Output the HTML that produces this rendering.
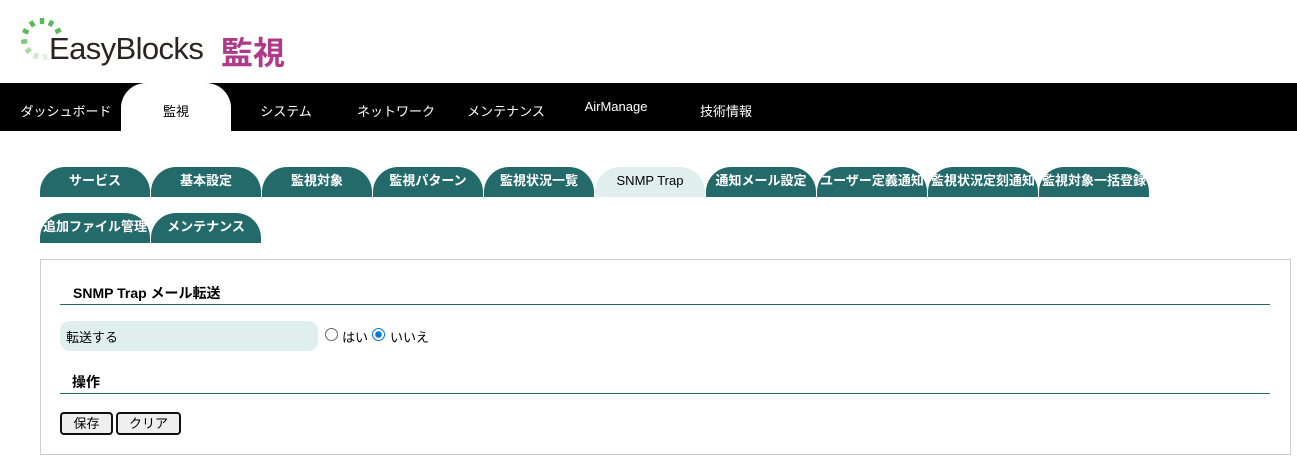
<!DOCTYPE html>
<html><head><meta charset="utf-8"><style>
body{margin:0;width:1297px;height:460px;background:#fff;font-family:"Liberation Sans","Noto Sans CJK JP",sans-serif;position:relative;overflow:hidden}
.abs{position:absolute}
.nav{position:absolute;left:0;top:83px;width:1297px;height:48px;background:#000}
.ni{position:absolute;color:#fff;font-size:13px;top:18px;transform:translateX(-50%);white-space:nowrap}
.tab{position:absolute;width:110px;height:30px;background:#256a6a;color:#fff;border-radius:25px 25px 0 0;font-size:13px;font-weight:bold;text-align:center;line-height:28px;white-space:nowrap;overflow:hidden}
.btn{position:absolute;top:412px;height:19px;border:2px solid #111;border-radius:4px;background:#efefef;font-size:13px;line-height:19px;text-align:center}
</style></head><body>
<svg class="abs" style="left:0;top:0" width="80" height="70" viewBox="0 0 80 70">
<g stroke-width="4.5" transform="translate(42,39)">
<line x1="0" y1="-21" x2="0" y2="-15" stroke="#5cb85c" transform="rotate(63)"/>
<line x1="0" y1="-21" x2="0" y2="-15" stroke="#5cb85c" transform="rotate(30)"/>
<line x1="0" y1="-21" x2="0" y2="-15" stroke="#5cb85c" transform="rotate(0)"/>
<line x1="0" y1="-21" x2="0" y2="-15" stroke="#5cb85c" transform="rotate(-33)"/>
<line x1="0" y1="-21" x2="0" y2="-15" stroke="#5cb85c" transform="rotate(-65)"/>
<line x1="0" y1="-21" x2="0" y2="-15" stroke="#7cc77c" transform="rotate(-98)"/>
<line x1="0" y1="-21" x2="0" y2="-15" stroke="#a9daa9" transform="rotate(-130)"/>
<line x1="0" y1="-21" x2="0" y2="-15" stroke="#cdeacd" transform="rotate(-160)"/>
<line x1="0" y1="-21" x2="0" y2="-15" stroke="#e3f3e3" transform="rotate(170)"/>
</g></svg>
<div class="abs" style="left:49px;top:31px;font-size:31px;color:#2b2222;letter-spacing:-0.6px">EasyBlocks</div>
<div class="abs" style="left:221px;top:28px;font-size:32px;font-weight:bold;color:#b03a8a">監視</div>
<div class="nav">
<div class="abs" style="left:121px;top:0;width:110px;height:48px;background:#fff;border-radius:25px 25px 0 0"></div>
<div class="ni" style="left:66px">ダッシュボード</div>
<div class="ni" style="left:176px;color:#000">監視</div>
<div class="ni" style="left:286px">システム</div>
<div class="ni" style="left:396px">ネットワーク</div>
<div class="ni" style="left:506px">メンテナンス</div>
<div class="ni" style="left:616px;top:16px">AirManage</div>
<div class="ni" style="left:726px">技術情報</div>
</div>
<div class="tab" style="left:40px;top:167px">サービス</div>
<div class="tab" style="left:151px;top:167px">基本設定</div>
<div class="tab" style="left:262px;top:167px">監視対象</div>
<div class="tab" style="left:373px;top:167px">監視パターン</div>
<div class="tab" style="left:484px;top:167px">監視状況一覧</div>
<div class="tab" style="left:595px;top:167px;background:#e0eeee;color:#000;font-weight:normal">SNMP Trap</div>
<div class="tab" style="left:706px;top:167px">通知メール設定</div>
<div class="tab" style="left:817px;top:167px">ユーザー定義通知</div>
<div class="tab" style="left:928px;top:167px">監視状況定刻通知</div>
<div class="tab" style="left:1039px;top:167px">監視対象一括登録</div>
<div class="tab" style="left:40px;top:213px">追加ファイル管理</div>
<div class="tab" style="left:151px;top:213px">メンテナンス</div>
<div class="abs" style="left:40px;top:259px;width:1249px;height:194px;border:1px solid #ccc"></div>
<div class="abs" style="left:73px;top:283px;font-size:14px;font-weight:bold">SNMP Trap メール転送</div>
<div class="abs" style="left:60px;top:304px;width:1210px;height:1px;background:#256a6a"></div>
<div class="abs" style="left:60px;top:321px;width:258px;height:30px;background:#e0eeee;border-radius:10px"></div>
<div class="abs" style="left:66px;top:327px;font-size:13px">転送する</div>
<div class="abs" style="left:325px;top:328px;width:11px;height:11px;border:1px solid #666;border-radius:50%"></div>
<div class="abs" style="left:342px;top:327px;font-size:13px">はい</div>
<div class="abs" style="left:372px;top:328px;width:11px;height:11px;border:1px solid #0075db;border-radius:50%;background:radial-gradient(#0075db 3px,#fff 3.5px)"></div>
<div class="abs" style="left:390px;top:327px;font-size:13px">いいえ</div>
<div class="abs" style="left:72px;top:372px;font-size:14px;font-weight:bold">操作</div>
<div class="abs" style="left:60px;top:393px;width:1210px;height:1px;background:#256a6a"></div>
<div class="btn" style="left:60px;width:49px">保存</div>
<div class="btn" style="left:116px;width:61px">クリア</div>
</body></html>
